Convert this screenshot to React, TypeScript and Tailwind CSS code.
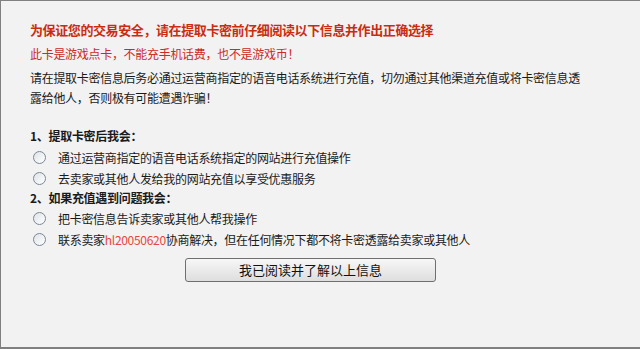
import React from "react"

const font = {
  fontFamily: '"Noto Sans CJK SC", "Noto Sans", sans-serif',
}

function Radio({ children }: { children: React.ReactNode }) {
  return (
    <div className="flex items-center h-[21px]">
      <span className="ml-[3px] w-[13px] h-[13px] rounded-full border border-[#7b8794] bg-gradient-to-br from-[#dfe3e8] to-white" />
      <span className="ml-[12px]">{children}</span>
    </div>
  )
}

export default function App() {
  return (
    <div
      style={font}
      className="w-[640px] h-[349px] bg-[#f2f2f2] border-t border-l border-b-2 border-[#808080] pl-[29px] pt-[19px] text-[12px] text-[#1a1a1a] tracking-[-0.3px] whitespace-nowrap"
    >
      <p className="text-[13px] leading-[20px] font-bold text-[#cc2b10] tracking-[-0.4px]">
        为保证您的交易安全，请在提取卡密前仔细阅读以下信息并作出正确选择
      </p>
      <p className="mt-[4px] leading-[20px] text-[#cc2a24]">
        此卡是游戏点卡，不能充手机话费，也不是游戏币！
      </p>
      <p className="mt-[4px] leading-[20px]">
        请在提取卡密信息后务必通过运营商指定的语音电话系统进行充值，切勿通过其他渠道充值或将卡密信息透
        <br />
        露给他人，否则极有可能遭遇诈骗！
      </p>

      <div className="mt-[18px] h-[20px] leading-[20px] font-bold">1、提取卡密后我会：</div>
      <div className="mt-[1px]">
        <Radio>通过运营商指定的语音电话系统指定的网站进行充值操作</Radio>
        <Radio>去卖家或其他人发给我的网站充值以享受优惠服务</Radio>
      </div>
      <div className="h-[18px] leading-[18px] font-bold">2、如果充值遇到问题我会：</div>
      <div className="mt-[1px]">
        <Radio>把卡密信息告诉卖家或其他人帮我操作</Radio>
        <Radio>
          联系卖家<span className="text-[#e8453c]">hl20050620</span>协商解决，但在任何情况下都不将卡密透露给卖家或其他人
        </Radio>
      </div>

      <div className="mt-[8px] pl-[155px]">
        <button className="w-[251px] h-[24px] rounded-[3px] border border-[#6f6f6f] bg-gradient-to-b from-[#f7f7f7] to-[#dedede] text-[13px] text-[#111] tracking-normal flex items-center justify-center">
          我已阅读并了解以上信息
        </button>
      </div>
    </div>
  )
}
